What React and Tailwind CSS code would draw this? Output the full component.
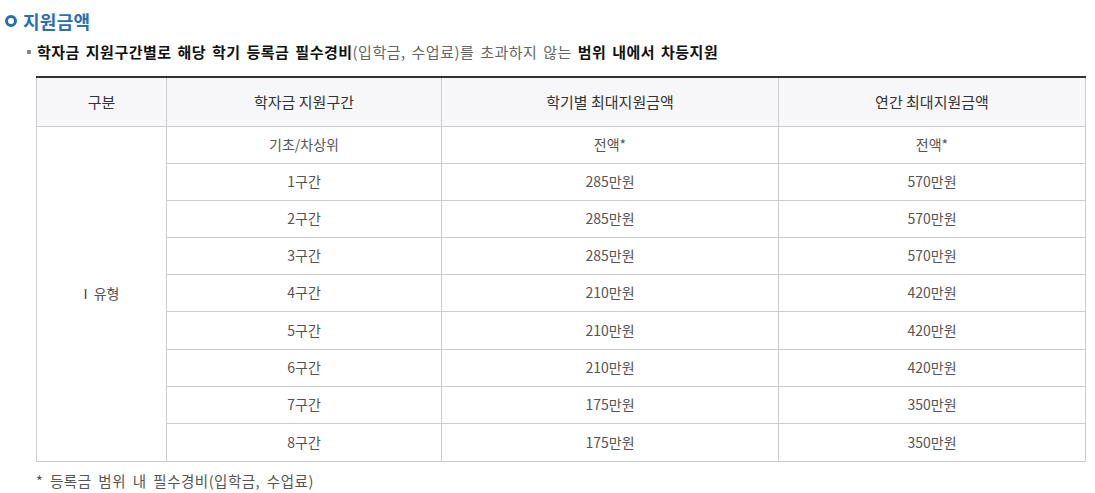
import React from "react";

const rows = [
  ["기초/차상위", "전액*", "전액*"],
  ["1구간", "285만원", "570만원"],
  ["2구간", "285만원", "570만원"],
  ["3구간", "285만원", "570만원"],
  ["4구간", "210만원", "420만원"],
  ["5구간", "210만원", "420만원"],
  ["6구간", "210만원", "420만원"],
  ["7구간", "175만원", "350만원"],
  ["8구간", "175만원", "350만원"],
];

export default function App() {
  return (
    <div
      className="bg-white w-[1095px] h-[493px] overflow-hidden text-[#555]"
      style={{ fontFamily: '"Noto Sans CJK KR", "Noto Sans", sans-serif' }}
    >
      <div className="flex items-center gap-[6px] pl-[5px] pt-[9px] h-[32px]">
        <span className="w-[12px] h-[12px] rounded-full border-[3px] border-[#2a6fb3] box-border" />
        <span className="text-[18px] leading-[22px] font-bold text-[#2a6fb3] tracking-[0.3px]">지원금액</span>
      </div>
      <div className="flex items-center pl-[27px] mt-[9px] h-[22px]">
        <span className="w-[4px] h-[4px] bg-[#888] mr-[6px]" />
        <span className="text-[15px] leading-[20px] text-[#222] whitespace-nowrap tracking-[0.5px] [word-spacing:2px]">
          <b className="font-bold text-[#111]">학자금 지원구간별로 해당 학기 등록금 필수경비</b>
          <span className="text-[#666]">(입학금, 수업료)를 초과하지 않는 </span>
          <b className="font-bold text-[#111]">범위 내에서 차등지원</b>
        </span>
      </div>
      <div className="pl-[36px] pr-[10px] mt-[13px]">
        <table className="w-[1049px] border-collapse table-fixed text-center">
          <colgroup>
            <col className="w-[130px]" />
            <col className="w-[275px]" />
            <col className="w-[337px]" />
            <col className="w-[307px]" />
          </colgroup>
          <thead>
            <tr className="bg-[#f7f7f9] border-t-2 border-t-[#333]">
              {["구분", "학자금 지원구간", "학기별 최대지원금액", "연간 최대지원금액"].map((h) => (
                <th
                  key={h}
                  className="h-[49px] p-0 border border-[#cccccc] border-t-[#333] border-t-2 font-normal text-[15px] text-[#333]"
                >
                  {h}
                </th>
              ))}
            </tr>
          </thead>
          <tbody>
            {rows.map((r, i) => (
              <tr key={i}>
                {i === 0 && (
                  <td rowSpan={9} className="p-0 border border-[#cccccc] text-[14px] text-[#555]">
                    <span className="text-[#6b3b3b]" style={{ fontFamily: '"DejaVu Sans", sans-serif' }}>Ⅰ</span>
                    <span className="ml-[6px]">유형</span>
                  </td>
                )}
                {r.map((c, j) => (
                  <td
                    key={j}
                    className={`${i === 5 || i === 8 ? "h-[38px]" : "h-[37px]"} p-0 border border-[#cccccc] text-[14px] text-[#555]`}
                  >
                    {c}
                  </td>
                ))}
              </tr>
            ))}
          </tbody>
        </table>
      </div>
      <div className="pl-[36px] mt-[9px] text-[14.5px] leading-[20px] text-[#555] tracking-[0.5px] [word-spacing:3px]">
        * 등록금 범위 내 필수경비(입학금, 수업료)
      </div>
    </div>
  );
}
